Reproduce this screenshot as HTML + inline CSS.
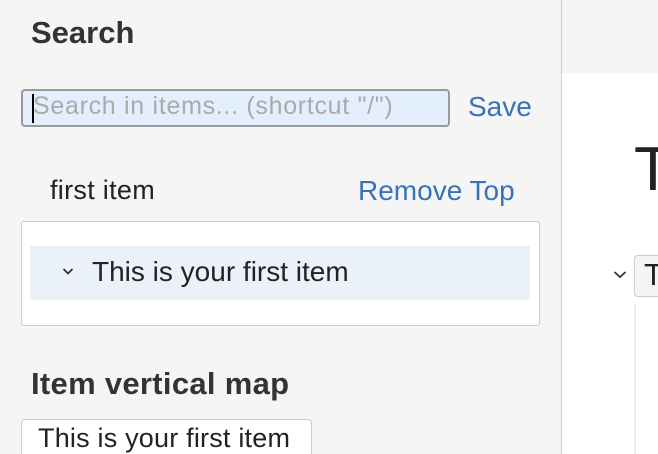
<!DOCTYPE html>
<html style="width:658px;height:454px;overflow:hidden"><head><style>
*{margin:0;padding:0;box-sizing:border-box}
body{width:658px;height:454px;overflow:hidden;background:#fff;font-family:"Liberation Sans",Arial,sans-serif;position:relative;color:#333}
.a{position:absolute;white-space:nowrap;line-height:1.15}
</style></head><body>
<div class="a" style="left:0;top:0;width:562px;height:454px;background:#f5f5f5;border-right:1px solid #ccc"></div>
<div class="a" style="left:562px;top:0;width:96px;height:73px;background:#f5f5f5"></div>
<div class="a" style="left:31px;top:15px;font-size:31px;font-weight:bold;color:#333">Search</div>
<div class="a" style="left:21px;top:89px;width:429px;height:38px;background:#e3effd;border:2px solid #999;border-radius:4px"></div>
<div class="a" style="left:32px;top:94px;width:2px;height:29px;background:#000"></div>
<div class="a" style="left:33px;top:92px;font-size:25px;color:#aaa;letter-spacing:0.7px">Search in items... (shortcut "/")</div>
<div class="a" style="left:468px;top:91px;font-size:28px;color:#3a73b5">Save</div>
<div class="a" style="left:50px;top:175px;font-size:27px;color:#222;letter-spacing:0.3px">first item</div>
<div class="a" style="left:358px;top:175px;font-size:28px;color:#3a73b5">Remove Top</div>
<div class="a" style="left:21px;top:221px;width:519px;height:105px;background:#fff;border:1px solid #ccc;border-radius:3px"></div>
<div class="a" style="left:30px;top:246px;width:500px;height:54px;background:#ebf1f9"></div>
<svg class="a" style="left:62px;top:267px" width="12" height="9"><path d="M1.5 2 L6 6.5 L10.5 2" fill="none" stroke="#333" stroke-width="1.8"/></svg>
<div class="a" style="left:92px;top:256px;font-size:28px;color:#222">This is your first item</div>
<div class="a" style="left:31px;top:366px;font-size:31px;font-weight:bold;color:#333;letter-spacing:0.3px">Item vertical map</div>
<div class="a" style="left:21px;top:419px;width:291px;height:50px;background:#fff;border:1px solid #ccc;border-radius:4px"></div>
<div class="a" style="left:38px;top:423px;font-size:27px;color:#222;letter-spacing:0.2px">This is your first item</div>
<div class="a" style="left:634px;top:134px;font-size:62px;color:#222">T</div>
<svg class="a" style="left:613px;top:270px" width="14" height="10"><path d="M1.5 2 L7 7 L12.5 2" fill="none" stroke="#333" stroke-width="1.8"/></svg>
<div class="a" style="left:634px;top:255px;width:40px;height:42px;background:#f5f5f5;border:1px solid #ccc;border-radius:4px"></div>
<div class="a" style="left:644px;top:257px;font-size:31px;color:#222">T</div>
<div class="a" style="left:634px;top:304px;width:2px;height:150px;background:#eee"></div>
</body></html>
